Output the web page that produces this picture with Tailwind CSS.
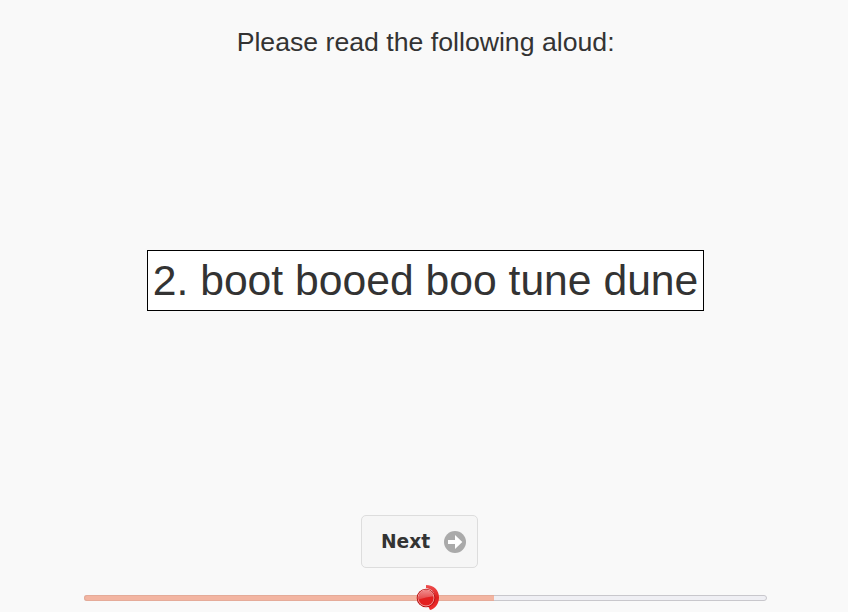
<!DOCTYPE html>
<html lang="en">
<head>
<meta charset="utf-8">
<title>Read aloud</title>
<script src="https://cdn.jsdelivr.net/npm/@tailwindcss/browser@4"></script>
</head>
<body class="h-[612px] overflow-hidden bg-[#f9f9f9] text-[#333333] font-['Liberation_Sans',Arial,sans-serif]">
<main class="flex h-[612px] flex-col items-center pl-[3px] pt-[27px]">
  <h1 class="h-[30px] whitespace-nowrap pl-[0.25px] text-[26.667px] leading-[30px]">Please read the following aloud:</h1>
  <div class="mt-[193px] h-[61px] w-[557px] shrink-0 whitespace-nowrap border border-black bg-white py-[5px] pl-[4.75px] text-[42.667px] leading-[49px]">2. boot booed boo tune dune</div>
  <button class="mr-3 mt-[204px] flex h-[53px] w-[117px] shrink-0 items-center justify-between rounded-[5px] border border-[#dddddd] bg-[#f6f6f6] pl-[19px] pr-[11px] font-['DejaVu_Sans',sans-serif] text-[18.667px] font-bold">
    <span class="mt-px">Next</span>
    <svg class="h-[22px] w-[22px]" viewBox="0 0 22 22"><circle cx="11" cy="11" r="11" fill="#aaa"/><path d="M4 9h7V4l7.3 7-7.3 7v-5H4z" fill="#fff"/></svg>
  </button>
  <div class="relative mt-[27px] h-[6px] w-[683px] shrink-0 rounded-[3px] border border-[#c8c7cc] bg-[#efeff4]">
    <div class="absolute -left-px -top-px h-[6px] w-[410px] rounded-l-[3px] border-y border-l border-[#e5ab99] bg-[#f3b5a2]"></div>
    <svg class="absolute left-[331px] -top-[12px] h-[28px] w-[26px]" viewBox="0 0 26 28">
      <defs>
        <linearGradient id="arc" x1="0" y1="0" x2="0" y2="1"><stop offset="0" stop-color="#ee5050"/><stop offset=".5" stop-color="#df2020"/><stop offset="1" stop-color="#ef3030"/></linearGradient>
        <linearGradient id="ball" x1="0" y1="0" x2="0" y2="1"><stop offset="0" stop-color="#f08a8a"/><stop offset="1" stop-color="#e34444"/></linearGradient>
      </defs>
      <path d="M10 1C18 1 23 6 23 13.5C23 20 19 25 14 26L12 22Q19 20 19 13Q18 5 10 4z" fill="url(#arc)"/>
      <circle cx="10" cy="14" r="9.3" fill="#b80c0c"/>
      <circle cx="10" cy="14" r="8.4" fill="#f4a0a0"/>
      <circle cx="10" cy="14" r="7.6" fill="#e32020"/>
      <path d="M2.6 15.6A7.5 7.5 0 0 1 17.3 12.3Q10 13.2 2.6 15.6z" fill="url(#ball)"/>
    </svg>
  </div>
</main>
</body>
</html>
